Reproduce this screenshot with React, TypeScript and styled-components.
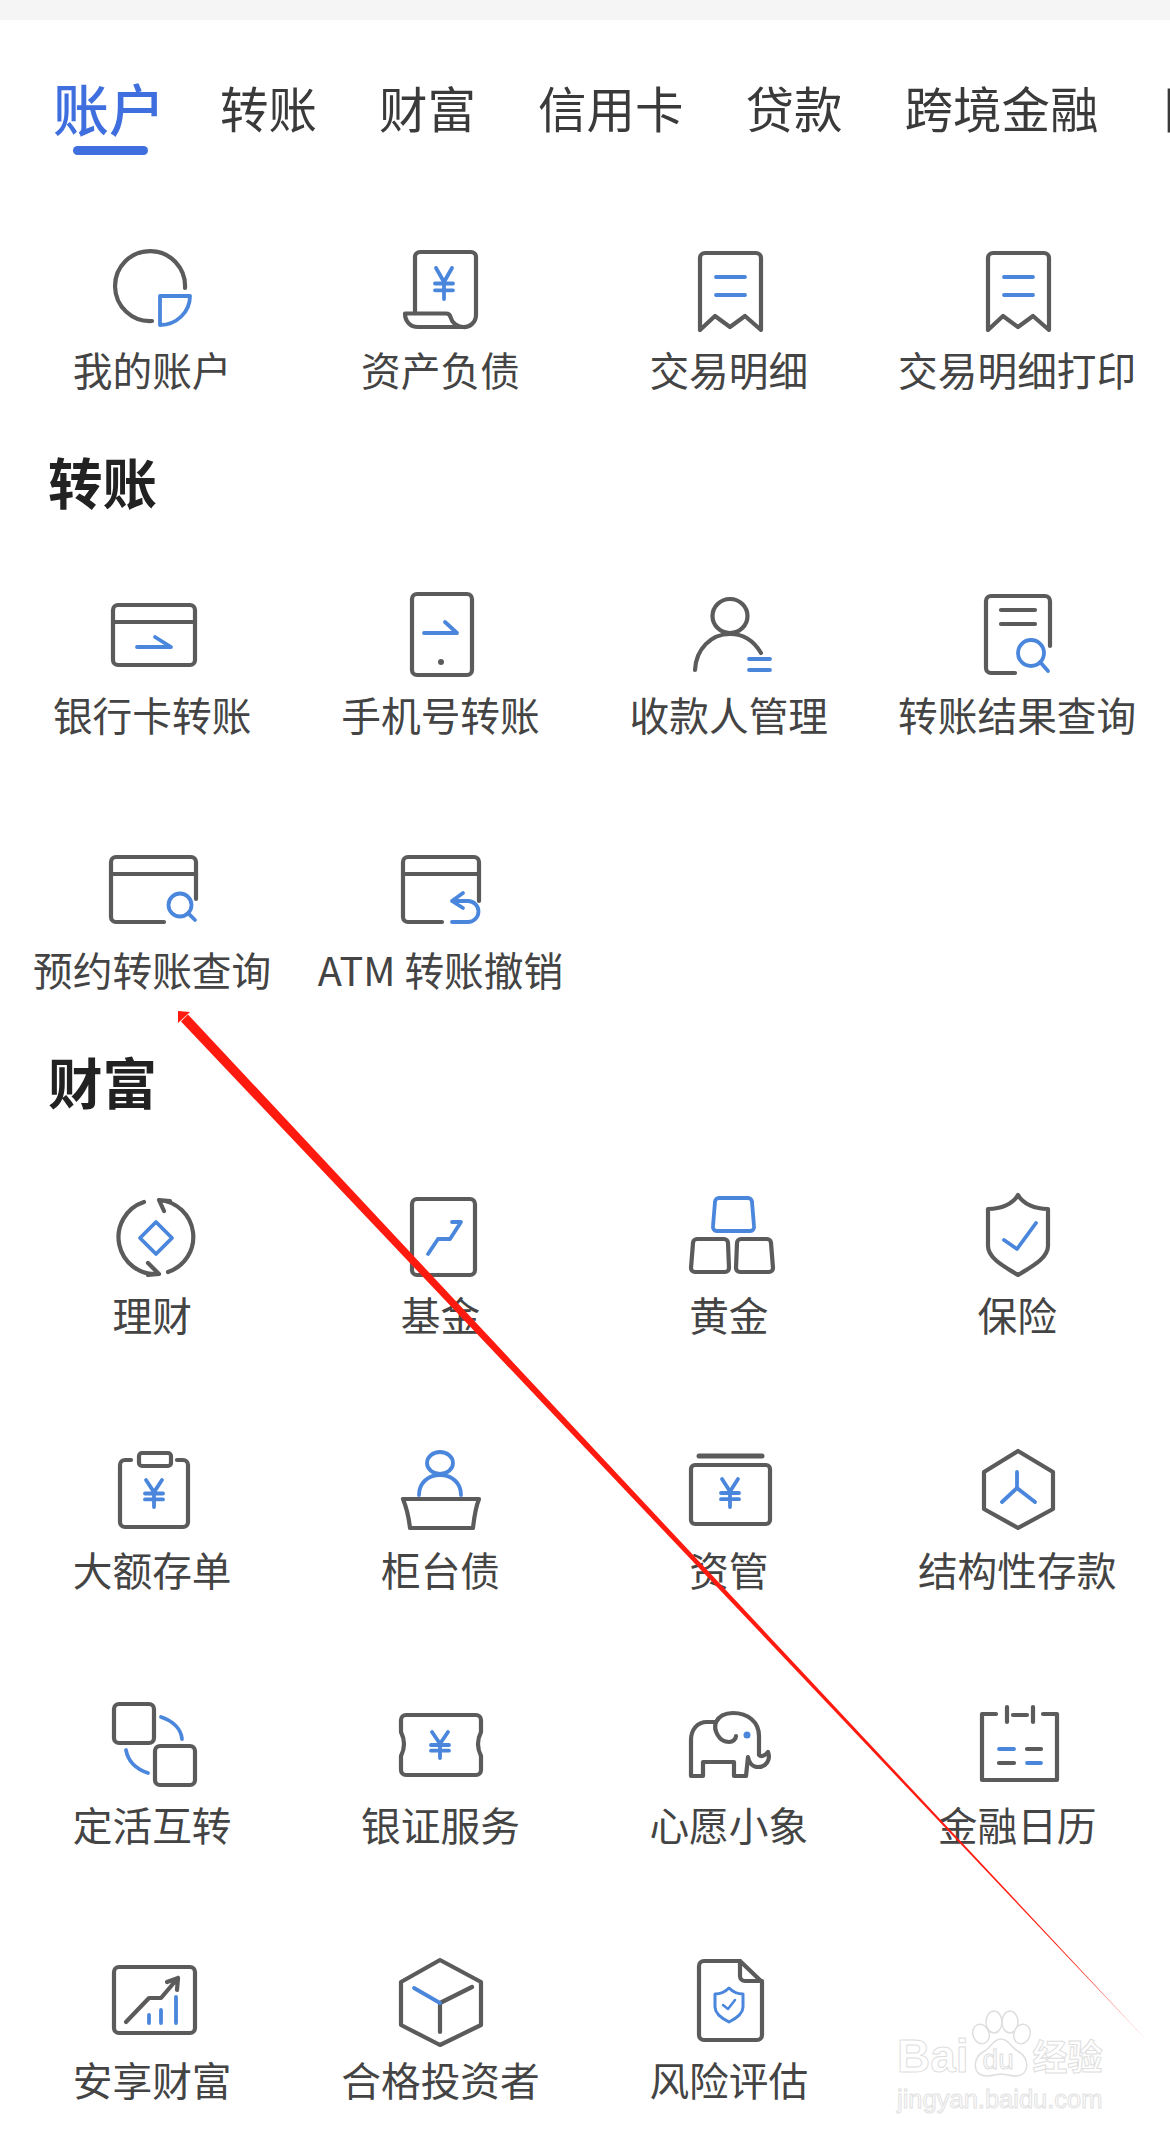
// App.tsx
// Bank service menu: tab strip, icon grids per section

import * as React from "react";
import styled, { createGlobalStyle } from "styled-components";

const GRAY = "#5b5b5b";
const BLUE = "#4a86dc";

const GlobalStyle = createGlobalStyle`
  html, body {
    margin: 0;
    padding: 0;
    background: #fff;
  }
  body {
    font-family: "Noto Sans CJK SC", "Noto Sans", sans-serif;
    overflow-x: hidden;
  }
`;

const IconSvg = styled.svg.attrs({ viewBox: "0 0 120 100" })`
  display: block;
  width: 120px;
  height: 100px;
`;

const Stroke = styled.g<{ $blue?: boolean }>`
  fill: none;
  stroke: ${(p) => (p.$blue ? BLUE : GRAY)};
  stroke-width: ${(p) => (p.$blue ? 3.8 : 4.2)};
  stroke-linecap: round;
  stroke-linejoin: round;
`;

const Yen = ({ x, y, h = 28 }: { x: number; y: number; h?: number }) => (
  <Stroke $blue>
    <path
      d={`M${x - 8} ${y} L${x} ${y + h * 0.45} L${x + 8} ${y} M${x} ${y + h * 0.45} V${y + h} M${x - 9} ${y + h * 0.5} H${x + 9} M${x - 9} ${y + h * 0.72} H${x + 9}`}
    />
  </Stroke>
);

const Glass = ({ cx, cy, r, x2, y2 }: { cx: number; cy: number; r: number; x2: number; y2: number }) => (
  <Stroke $blue>
    <circle cx={cx} cy={cy} r={r} />
    <path d={`M${cx + r * 0.7} ${cy + r * 0.7} L${x2} ${y2}`} />
  </Stroke>
);

const ICONS: Record<string, React.ReactNode> = {
  account: (
    <>
      <Stroke><path d="M93 49 A35 35 0 1 0 60 82" /></Stroke>
      <Stroke $blue><path d="M68 57 H98 A30 29 0 0 1 68 86 Z" /></Stroke>
    </>
  ),
  assets: (
    <>
      <Stroke>
        <path d="M35 74 V18 a5 5 0 0 1 5-5 H91 a5 5 0 0 1 5 5 V76 a12 12 0 0 1 -13 12 H38 C30 88 25 82 25 74.5 H66 C69 74.5 70 76 70.500 78 C72 84 77 88 83 88" />
      </Stroke>
      <Yen x={64} y={29} h={31} />
    </>
  ),
  receipt: (
    <>
      <Stroke><path d="M31 91 V19 a5 5 0 0 1 5-5 H87 a5 5 0 0 1 5 5 V91 L76 77 L61 88 L46 77 Z" /></Stroke>
      <Stroke $blue><path d="M47 38 H76 M47 56 H76" /></Stroke>
    </>
  ),
  cardTransfer: (
    <>
      <Stroke><rect x="21" y="21" width="82" height="60" rx="5" /><path d="M21 38 H103" /></Stroke>
      <Stroke $blue><path d="M45 63 H79 L63 53" /></Stroke>
    </>
  ),
  phone: (
    <>
      <Stroke><rect x="32" y="10" width="60" height="81" rx="5" /></Stroke>
      <Stroke $blue><path d="M44 49 H77 L65 38" /></Stroke>
      <circle cx="61" cy="78" r="3" fill={GRAY} />
    </>
  ),
  payee: (
    <>
      <Stroke>
        <ellipse cx="61" cy="32" rx="17.500" ry="17" />
        <path d="M26 86 C27 65 42 50 61 50 C74 50 85 57 92 69" />
      </Stroke>
      <Stroke $blue><path d="M80 75 H101 M80 86 H101" /></Stroke>
    </>
  ),
  docSearch: (
    <>
      <Stroke>
        <path d="M93 62 V17 a5 5 0 0 0-5-5 H34 a5 5 0 0 0-5 5 V84 a5 5 0 0 0 5 5 H58" />
        <path d="M44 26 H78 M44 40 H78" />
      </Stroke>
      <Glass cx={74} cy={69} r={13} x2={91} y2={87} />
    </>
  ),
  cardSearch: (
    <>
      <Stroke>
        <path d="M104 60 V23 a5 5 0 0 0-5-5 H24 a5 5 0 0 0-5 5 V78 a5 5 0 0 0 5 5 H72" />
        <path d="M19 35 H104" />
      </Stroke>
      <Glass cx={88} cy={66} r={11.5} x2={103} y2={81} />
    </>
  ),
  cardUndo: (
    <>
      <Stroke>
        <path d="M99 62 V23 a5 5 0 0 0-5-5 H28 a5 5 0 0 0-5 5 V78 a5 5 0 0 0 5 5 H62" />
        <path d="M23 35 H99" />
      </Stroke>
      <Stroke $blue><path d="M83 54 L72 62 L83 69 M72 62 H88 a10.500 10.500 0 0 1 0 21 H72" /></Stroke>
    </>
  ),
  wealth: (
    <>
      <Stroke>
        <path d="M67 16 A37 37 0 0 1 76 88 M72 27 L67 16 L78 17" />
        <path d="M52 18 A37 37 0 0 0 67 90 M56 79 L67 90 L56 91" />
      </Stroke>
      <Stroke $blue><path d="M64 38 L80 54 L64 70 L48 54 Z" /></Stroke>
    </>
  ),
  fund: (
    <>
      <Stroke><rect x="32" y="15" width="63" height="76" rx="5" /></Stroke>
      <Stroke $blue><path d="M48 70 L58 55 H70 L81 38 H72" /></Stroke>
    </>
  ),
  gold: (
    <>
      <Stroke $blue><path d="M50 14 H79 a4 4 0 0 1 4 4 L85 42 a4 4 0 0 1-4 5 H48 a4 4 0 0 1-4-5 L46 18 a4 4 0 0 1 4-4 Z" /></Stroke>
      <Stroke>
        <path d="M28 55 H55 a4 4 0 0 1 4 4 L60 84 a4 4 0 0 1-4 4 H26 a4 4 0 0 1-4-4 L24 59 a4 4 0 0 1 4-4 Z" />
        <path d="M72 55 H98 a4 4 0 0 1 4 4 L104 84 a4 4 0 0 1-4 4 H71 a4 4 0 0 1-4-4 L68 59 a4 4 0 0 1 4-4 Z" />
      </Stroke>
    </>
  ),
  shield: (
    <>
      <Stroke><path d="M61 11 C66 20 78 25 91 25 V62 C91 75 72 84 61 91 C50 84 31 75 31 62 V25 C44 25 56 20 61 11 Z" /></Stroke>
      <Stroke $blue><path d="M47 56 L60 65 L79 39" /></Stroke>
    </>
  ),
  clipboard: (
    <>
      <Stroke>
        <path d="M39 21 H33 a5 5 0 0 0-5 5 V83 a5 5 0 0 0 5 5 H91 a5 5 0 0 0 5-5 V26 a5 5 0 0 0-5-5 H85" />
        <rect x="47" y="14" width="32" height="13" rx="3" />
      </Stroke>
      <Yen x={62} y={41} h={27} />
    </>
  ),
  counter: (
    <>
      <Stroke $blue>
        <ellipse cx="60" cy="24" rx="13" ry="11" />
        <path d="M39 56 C39 44 48 36 60 36 C72 36 81 44 81 56" />
      </Stroke>
      <Stroke><path d="M23 60 H99 C95 70 94 80 93 89 H30 C29 80 27 70 23 60 Z" /></Stroke>
    </>
  ),
  custody: (
    <>
      <Stroke>
        <path d="M30 17 H93" strokeWidth="5" />
        <rect x="22" y="26" width="79" height="59" rx="4" />
      </Stroke>
      <Yen x={61} y={40} h={28} />
    </>
  ),
  structured: (
    <>
      <Stroke><path d="M61 12 L96 33 V70 L61 89 L27 70 V33 Z" /></Stroke>
      <Stroke $blue><path d="M60 33 V49 M45 63 L60 49 L78 63" /></Stroke>
    </>
  ),
  swap: (
    <>
      <Stroke>
        <rect x="22" y="10" width="40" height="39" rx="5" />
        <rect x="63" y="52" width="40" height="39" rx="5" />
      </Stroke>
      <Stroke $blue><path d="M69 23 C81 27 89 35 90 45 M34 56 C36 67 44 75 56 79" /></Stroke>
    </>
  ),
  ticket: (
    <>
      <Stroke><path d="M26 21 H96 a5 5 0 0 1 5 5 V38 Q95 50 101 62 V76 a5 5 0 0 1-5 5 H26 a5 5 0 0 1-5-5 V62 Q27 50 21 38 V26 a5 5 0 0 1 5-5 Z" /></Stroke>
      <Yen x={60} y={38} h={26} />
    </>
  ),
  elephant: (
    <>
      <Stroke>
        <path d="M22 82 V46 C22 36 28 28 38 28 H47 C50 22 56 19 64 19 C79 19 90 28 90 42 V61 C92 63 96 62 99 58 C102 66 97 73 89 73 C84 73 80 69 79 63 L77 82 H65 V68 H34 V82 Z" />
        <path d="M47 28 C44 36 50 48 60 48 C64 48 67 45 67 42" />
      </Stroke>
      <circle cx="78" cy="41" r="3.500" fill={BLUE} />
    </>
  ),
  calendar: (
    <>
      <Stroke>
        <path d="M39 20 H25 V86 H100 V20 H86 M50 13 V28 M76 13 V28 M56 21 H70" />
        <path d="M70 55 H84 M42 69 H57" />
      </Stroke>
      <Stroke $blue><path d="M42 55 H57 M70 69 H84" /></Stroke>
    </>
  ),
  chart: (
    <>
      <Stroke>
        <rect x="22" y="18" width="81" height="66" rx="5" />
        <path d="M34 73 L57 49 H69 L86 29 M75 33 L86 29 L85 41" />
      </Stroke>
      <Stroke $blue><path d="M57 66 V74 M69 61 V74 M84 48 V74" /></Stroke>
    </>
  ),
  cube: (
    <>
      <Stroke><path d="M60 11 L101 33 V76 L60 96 L21 76 V33 Z M60 54 L92 38 M60 54 V83" /></Stroke>
      <Stroke $blue><path d="M34 39 L60 54" /></Stroke>
    </>
  ),
  file: (
    <>
      <Stroke>
        <path d="M71 12 H35 a5 5 0 0 0-5 5 V86 a5 5 0 0 0 5 5 H88 a5 5 0 0 0 5-5 V33 Z" />
        <path d="M71 12 V27 a5 5 0 0 0 5 5 H93" />
      </Stroke>
      <Stroke $blue>
        <path d="M60 39 C64 43 69 45 74 45 V58 C74 65 66 70 60 73 C54 70 46 65 46 58 V45 C51 45 56 43 60 39 Z" strokeWidth="3" />
        <path d="M54 56 L59 60 L66 51" strokeWidth="2.500" />
      </Stroke>
    </>
  ),
};

const TABS = ["账户", "转账", "财富", "信用卡", "贷款", "跨境金融", "国债"];

const SECTIONS: { title?: string; items: [string, string][] }[] = [
  {
    items: [
      ["我的账户", "account"],
      ["资产负债", "assets"],
      ["交易明细", "receipt"],
      ["交易明细打印", "receipt"],
    ],
  },
  {
    title: "转账",
    items: [
      ["银行卡转账", "cardTransfer"],
      ["手机号转账", "phone"],
      ["收款人管理", "payee"],
      ["转账结果查询", "docSearch"],
      ["预约转账查询", "cardSearch"],
      ["ATM 转账撤销", "cardUndo"],
    ],
  },
  {
    title: "财富",
    items: [
      ["理财", "wealth"],
      ["基金", "fund"],
      ["黄金", "gold"],
      ["保险", "shield"],
      ["大额存单", "clipboard"],
      ["柜台债", "counter"],
      ["资管", "custody"],
      ["结构性存款", "structured"],
      ["定活互转", "swap"],
      ["银证服务", "ticket"],
      ["心愿小象", "elephant"],
      ["金融日历", "calendar"],
      ["安享财富", "chart"],
      ["合格投资者", "cube"],
      ["风险评估", "file"],
    ],
  },
];

const App = () => {
  return (
    <Page>
      <GlobalStyle />
      <TopStrip />
      <TabBar>
        {TABS.map((tab, i) => (
          <Tab key={tab} $active={i === 0}>
            <TabLabel $active={i === 0}>{tab}</TabLabel>
            {i === 0 && <TabIndicator />}
          </Tab>
        ))}
      </TabBar>
      {SECTIONS.map((section, i) => (
        <Section key={i}>
          {section.title && <SectionTitle>{section.title}</SectionTitle>}
          <Grid>
            {section.items.map(([label, icon]) => (
              <Cell key={label}>
                <IconSvg>{ICONS[icon]}</IconSvg>
                <CellLabel>{label}</CellLabel>
              </Cell>
            ))}
          </Grid>
        </Section>
      ))}

      {/* hand-drawn pointer lying over the menu */}
      <Annotation viewBox="0 0 1170 2138">
        <defs>
          <linearGradient id="pointerFade" gradientUnits="userSpaceOnUse" x1="178" y1="1011" x2="1152" y2="2046">
            <stop offset="0.93" stopColor="#ff1a10" />
            <stop offset="1" stopColor="#ff1a10" stopOpacity="0.35" />
          </linearGradient>
        </defs>
        <polygon points="178,1011 190,1012 178,1023" fill="#ff1a10" />
        <polygon points="188,1014.500 181,1021.500 1152,2046" fill="url(#pointerFade)" />
      </Annotation>

      <Watermark>
        <WatermarkTop>
          <WatermarkWord>Bai</WatermarkWord>
          <Paw>
            <svg width="64" height="68" viewBox="0 0 64 68">
              <PawShape>
                <ellipse cx="12" cy="24" rx="8" ry="10" transform="rotate(-20 12 24)" />
                <ellipse cx="25" cy="12" rx="8" ry="11" />
                <ellipse cx="41" cy="12" rx="8" ry="11" />
                <ellipse cx="53" cy="24" rx="8" ry="10" transform="rotate(20 53 24)" />
                <path d="M32 29 C40 29 42 38 50 42 C60 47 62 66 46 66 C40 66 36 64 32 64 C28 64 24 66 18 66 C2 66 4 47 14 42 C22 38 24 29 32 29 Z" />
              </PawShape>
            </svg>
            <PawText>du</PawText>
          </Paw>
          <WatermarkWord $cjk>经验</WatermarkWord>
        </WatermarkTop>
        <WatermarkUrl>jingyan.baidu.com</WatermarkUrl>
      </Watermark>
    </Page>
  );
};
export default App;

const Page = styled.div`
  position: relative;
  width: 1170px;
  height: 2138px;
  overflow: hidden;
  background: #fff;
`;

const TopStrip = styled.div`
  height: 20px;
  background: #f5f5f5;
`;

const TabBar = styled.div`
  display: flex;
  align-items: flex-start;
  gap: 62px;
  padding: 57px 0 0 53px;
  height: 78px;
  white-space: nowrap;
`;

const Tab = styled.div<{ $active?: boolean }>`
  display: flex;
  flex-direction: column;
  align-items: center;
  flex-shrink: 0;
  gap: 9px;
  margin-right: ${(p) => (p.$active ? -7 : 0)}px;
  &:last-child {
    margin-left: 3px;
  }
`;

const TabLabel = styled.div<{ $active?: boolean }>`
  font-size: ${(p) => (p.$active ? 56 : 48.5)}px;
  font-weight: ${(p) => (p.$active ? 500 : 400)};
  line-height: 60px;
  color: ${(p) => (p.$active ? "#3f6fdf" : "#3a3a3a")};
`;

const TabIndicator = styled.div`
  width: 75px;
  height: 9px;
  margin-left: 2px;
  border-radius: 5px;
  background: #3f6fdf;
`;

const Section = styled.section`
  margin-top: 84px;
  & + & {
    margin-top: 54px;
  }
`;

const SectionTitle = styled.h2`
  margin: 0 0 71px;
  padding-left: 48px;
  font-size: 54.5px;
  font-weight: 700;
  line-height: 64px;
  color: #222;
`;

const Grid = styled.div`
  display: grid;
  grid-template-columns: repeat(4, 288.33px);
  row-gap: 99px;
  padding-left: 8px;
`;

const Cell = styled.div`
  display: flex;
  flex-direction: column;
  align-items: center;
  gap: 4px;
`;

const CellLabel = styled.div`
  font-size: 39.7px;
  line-height: 52px;
  color: #444;
  white-space: nowrap;
`;

const Annotation = styled.svg`
  position: absolute;
  left: 0;
  top: 0;
  width: 1170px;
  height: 2138px;
  pointer-events: none;
`;

const Watermark = styled.div`
  position: absolute;
  left: 897px;
  top: 2010px;
  width: 215px;
  display: flex;
  flex-direction: column;
  align-items: flex-start;
  pointer-events: none;
`;

const WatermarkTop = styled.div`
  display: flex;
  align-items: flex-end;
`;

const WatermarkWord = styled.span<{ $cjk?: boolean }>`
  font-family: ${(p) => (p.$cjk ? '"Noto Sans CJK SC"' : '"Liberation Sans"')}, sans-serif;
  font-size: ${(p) => (p.$cjk ? 35 : 46)}px;
  font-weight: 700;
  line-height: 46px;
  color: #fff;
  -webkit-text-stroke: 1px #dedede;
  margin-bottom: ${(p) => (p.$cjk ? 0 : -1)}px;
`;

const Paw = styled.div`
  position: relative;
  width: 64px;
  height: 68px;
  flex-shrink: 0;
`;

const PawShape = styled.g`
  fill: #fff;
  stroke: #dedede;
  stroke-width: 1.500;
`;

const PawText = styled.span`
  position: absolute;
  left: 14px;
  bottom: 3px;
  font-family: "Liberation Sans", sans-serif;
  font-size: 28px;
  line-height: 30px;
  color: #fff;
  -webkit-text-stroke: 1px #dedede;
`;

const WatermarkUrl = styled.div`
  margin-top: 6px;
  font-family: "Liberation Sans", sans-serif;
  font-size: 25.5px;
  line-height: 30px;
  color: #fff;
  -webkit-text-stroke: 1px #e2e2e2;
  white-space: nowrap;
`;
